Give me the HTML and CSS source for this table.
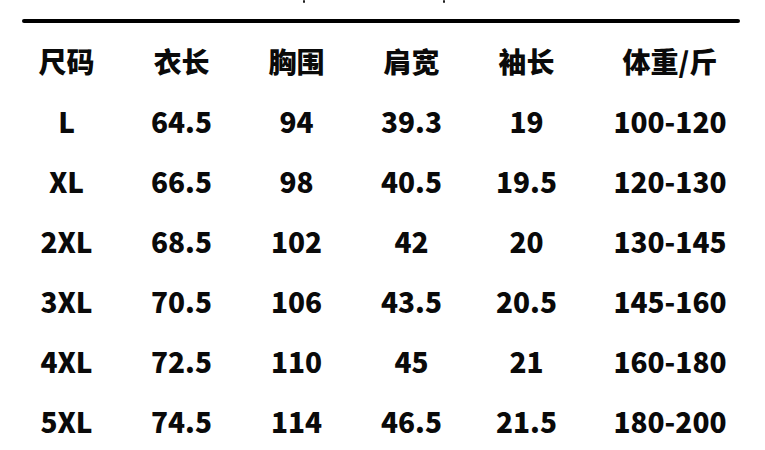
FILE: index.html
```html
<!DOCTYPE html>
<html lang="zh-CN">
<head>
<meta charset="utf-8">
<title>尺码表</title>
<link rel="stylesheet" href="styles.css">
</head>
<body>
<div class="page">
  <div class="top-strip">
    <span class="mark"></span>
    <span class="mark mark-right"></span>
  </div>
  <div class="rule"></div>
  <div class="table">
    <div class="row head">
      <div>尺码</div><div>衣长</div><div>胸围</div><div>肩宽</div><div>袖长</div><div>体重/斤</div>
    </div>
    <div class="row">
      <div>L</div><div>64.5</div><div>94</div><div>39.3</div><div>19</div><div>100-120</div>
    </div>
    <div class="row">
      <div>XL</div><div>66.5</div><div>98</div><div>40.5</div><div>19.5</div><div>120-130</div>
    </div>
    <div class="row">
      <div>2XL</div><div>68.5</div><div>102</div><div>42</div><div>20</div><div>130-145</div>
    </div>
    <div class="row">
      <div>3XL</div><div>70.5</div><div>106</div><div>43.5</div><div>20.5</div><div>145-160</div>
    </div>
    <div class="row">
      <div>4XL</div><div>72.5</div><div>110</div><div>45</div><div>21</div><div>160-180</div>
    </div>
    <div class="row">
      <div>5XL</div><div>74.5</div><div>114</div><div>46.5</div><div>21.5</div><div>180-200</div>
    </div>
  </div>
</div>
</body>
</html>
```
FILE: styles.css
```css
html, body {
  margin: 0;
  padding: 0;
  background: #ffffff;
}
body {
  width: 765px;
  height: 450px;
  overflow: hidden;
  font-family: "Noto Sans CJK SC", "Noto Sans", sans-serif;
  color: #0a0a0a;
}
.page {
  display: flex;
  flex-direction: column;
}
.top-strip {
  height: 19px;
  display: flex;
  align-items: flex-start;
  padding-left: 303px;
}
.mark {
  width: 2px;
  height: 3px;
  background: #222;
  border-radius: 1px;
}
.mark-right {
  margin-left: 138px;
}
.rule {
  margin-left: 22px;
  width: 718px;
  height: 4px;
  background: #000;
  border-radius: 2px;
}
.table {
  padding-top: 8px;
  padding-left: 9px;
  display: flex;
  flex-direction: column;
}
.row {
  display: grid;
  grid-template-columns: 115px 115px 115px 115px 115px 172px;
  height: 60px;
  align-items: center;
  font-size: 28px;
  font-weight: 900;
  line-height: 1;
}
.row > div {
  text-align: center;
  white-space: nowrap;
}
```
